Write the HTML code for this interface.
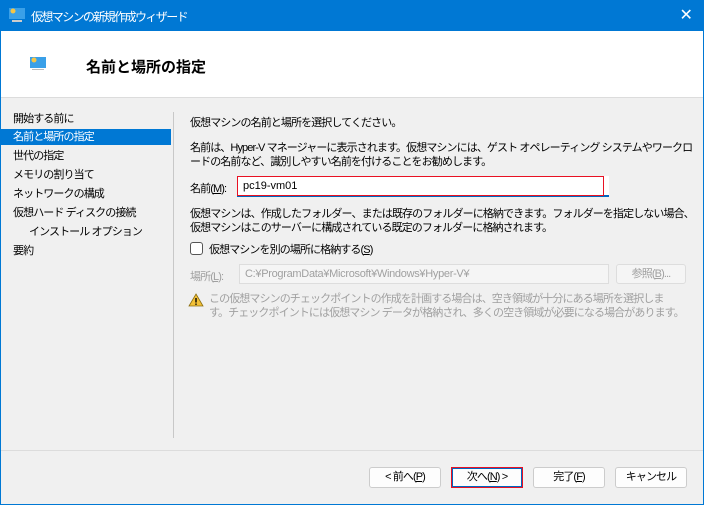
<!DOCTYPE html><html><head><meta charset="utf-8"><style>
*{margin:0;padding:0;box-sizing:border-box}
body{width:704px;height:505px;overflow:hidden;background:#0078d4;font-family:"Liberation Sans","Noto Sans CJK JP",sans-serif;font-size:11px;letter-spacing:-0.9px;color:#000;position:relative}
.win{position:absolute;left:1px;top:31px;width:702px;height:473px;background:#f0f0f0}
.title{position:absolute;left:31px;top:8px;color:#fff;font-size:12px;letter-spacing:-1.6px}
.x{position:absolute;right:12px;top:5px;color:#fff;font-size:16px}
.head{position:absolute;left:0;top:0;width:702px;height:67px;background:#fff;border-bottom:1px solid #dcdcdc}
.a{position:absolute;white-space:nowrap}
.nav div{position:absolute;left:0;width:170px;height:16px;padding-left:12px;line-height:16px}
.sel{background:#0078d4;color:#fff}
.btn{position:absolute;top:436px;height:21px;background:#fdfdfd;border:1px solid #ccc;border-radius:3px;text-align:center;line-height:19px}
.g{color:#a0a0a0}
</style></head><body>
<svg style="position:absolute;left:8px;top:7px" width="18" height="16"><rect x="1" y="1" width="16" height="11" fill="#3aa0e8"/><circle cx="5" cy="4" r="2.5" fill="#f6c646"/><rect x="4" y="13" width="10" height="2" fill="#ccc"/></svg>
<div class="title">仮想マシンの新規作成ウィザード</div>
<div class="x">✕</div>
<div class="win">
<div class="head">
<svg style="position:absolute;left:28px;top:25px" width="18" height="16"><rect x="1" y="1" width="16" height="11" fill="#3aa0e8"/><circle cx="5" cy="4" r="2.5" fill="#f6c646"/><rect x="3" y="13" width="12" height="1" fill="#bbb"/></svg>
<div class="a" style="left:85px;top:25px;font-size:15px;font-weight:bold;letter-spacing:0">名前と場所の指定</div>
</div>
<div class="nav">
<div style="top:80px">開始する前に</div>
<div class="sel" style="top:98px">名前と場所の指定</div>
<div style="top:117px">世代の指定</div>
<div style="top:136px">メモリの割り当て</div>
<div style="top:155px">ネットワークの構成</div>
<div style="top:174px">仮想ハード ディスクの接続</div>
<div style="top:193px;padding-left:28px">インストール オプション</div>
<div style="top:212px">要約</div>
</div>
<div class="a" style="left:172px;top:81px;width:1px;height:326px;background:#c8c8c8"></div>
<div class="a" style="left:189px;top:83px">仮想マシンの名前と場所を選択してください。</div>
<div class="a" style="left:189px;top:110px;line-height:14px">名前は、Hyper-V マネージャーに表示されます。仮想マシンには、ゲスト オペレーティング システムやワークロ<br>ードの名前など、識別しやすい名前を付けることをお勧めします。</div>
<div class="a" style="left:189px;top:149px">名前(<u>M</u>):</div>
<div class="a" style="left:236px;top:145px;width:372px;height:21px;background:#fff;border-bottom:2px solid #0067c0"></div>
<div class="a" style="left:236px;top:145px;width:367px;height:20px;border:1px solid #e81123"></div>
<div class="a" style="left:242px;top:149px;letter-spacing:0">pc19-vm01</div>
<div class="a" style="left:189px;top:176px;line-height:14px">仮想マシンは、作成したフォルダー、または既存のフォルダーに格納できます。フォルダーを指定しない場合、<br>仮想マシンはこのサーバーに構成されている既定のフォルダーに格納されます。</div>
<div class="a" style="left:189px;top:211px;width:13px;height:13px;border:1px solid #555;border-radius:3px;background:#fff"></div>
<div class="a" style="left:208px;top:210px">仮想マシンを別の場所に格納する(<u>S</u>)</div>
<div class="a g" style="left:189px;top:237px">場所(<u>L</u>):</div>
<div class="a g" style="left:238px;top:233px;width:370px;height:20px;border:1px solid #ddd;background:#f5f5f5;padding:3px 5px;letter-spacing:-0.3px">C:¥ProgramData¥Microsoft¥Windows¥Hyper-V¥</div>
<div class="a g" style="left:615px;top:233px;width:70px;height:20px;border:1px solid #ddd;background:#f5f5f5;text-align:center;line-height:18px;border-radius:3px">参照(<u>B</u>)...</div>
<svg class="a" style="left:187px;top:262px" width="16" height="14"><path d="M8 1L15 13H1Z" fill="#f2c037" stroke="#8a6d10" stroke-width=".8"/><rect x="7.3" y="5" width="1.4" height="4.5" fill="#000"/><rect x="7.3" y="10.5" width="1.4" height="1.4" fill="#000"/></svg>
<div class="a g" style="left:208px;top:261px;line-height:14px">この仮想マシンのチェックポイントの作成を計画する場合は、空き領域が十分にある場所を選択しま<br>す。チェックポイントには仮想マシン データが格納され、多くの空き領域が必要になる場合があります。</div>
<div class="a" style="left:0;top:419px;width:702px;height:1px;background:#dcdcdc"></div>
<div class="btn" style="left:368px;width:72px">&lt; 前へ(<u>P</u>)</div>
<div class="btn" style="left:450px;width:72px;border:1px solid #e81123;border-radius:0;box-shadow:inset 0 0 0 1px #0067c0">次へ(<u>N</u>) &gt;</div>
<div class="btn" style="left:532px;width:72px">完了(<u>F</u>)</div>
<div class="btn" style="left:614px;width:72px">キャンセル</div>
</div>
</body></html>
